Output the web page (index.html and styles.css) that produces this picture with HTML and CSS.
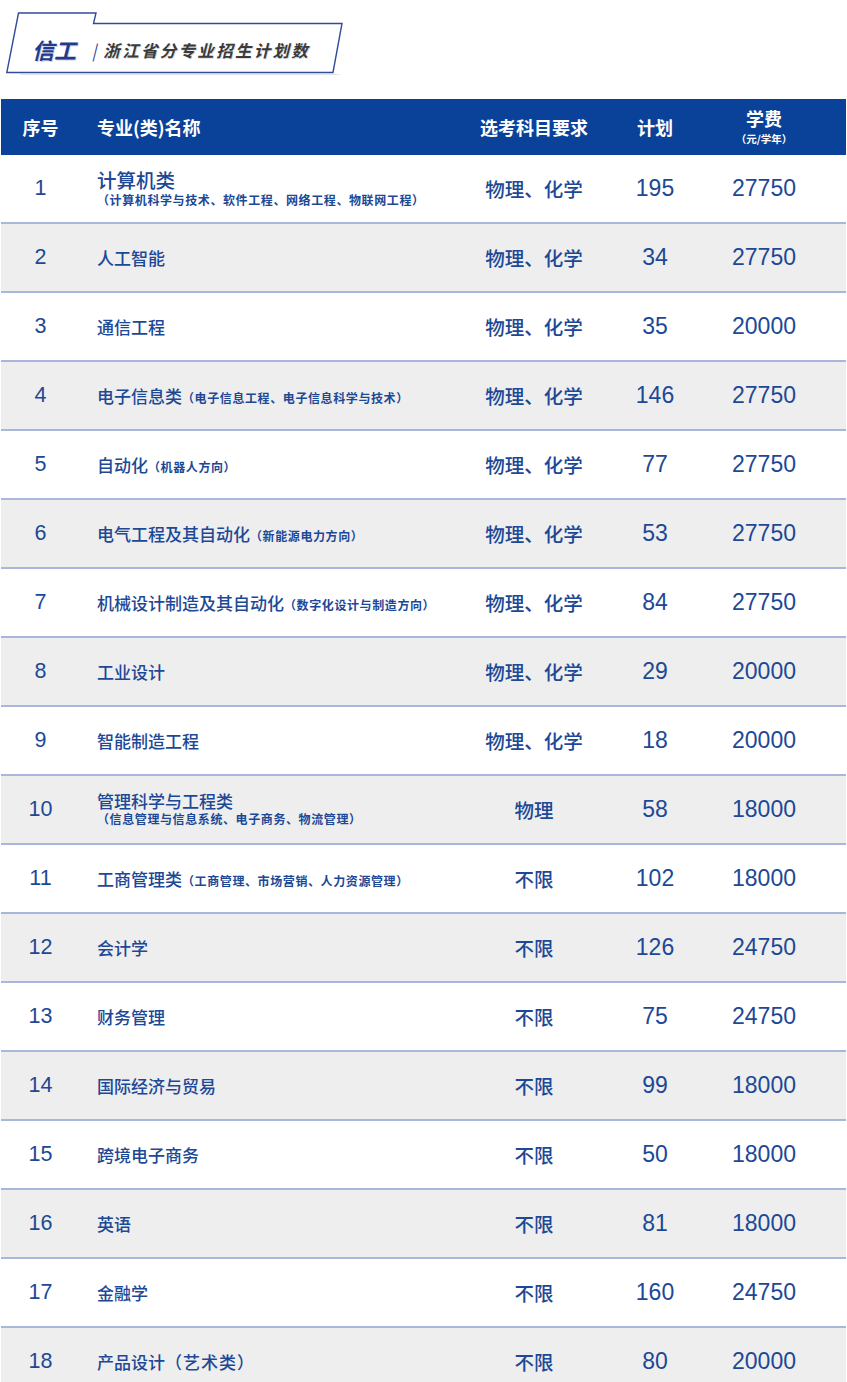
FILE: index.html
```html
<!DOCTYPE html>
<html lang="zh-CN">
<head>
<meta charset="utf-8">
<title>信工 浙江省分专业招生计划数</title>
<link rel="stylesheet" href="styles.css">
</head>
<body>
<div class="page">
  <div class="title-area">
    <div class="tag">
      <svg class="tag-shape" width="340" height="64" viewBox="0 0 340 64" aria-hidden="true">
        <polygon points="14,63 336,63 330,62 14,62" fill="#e2e2e2"/>
        <polygon points="12.5,1 90,1 87.5,11.5 336,11.5 327,60.5 0.8,60.5" fill="#ffffff" stroke="#2f4b9b" stroke-width="1.4" stroke-linejoin="miter"/>
      </svg>
      <span class="tag-school">信工</span>
      <span class="tag-bar">|</span>
      <span class="tag-text">浙江省分专业招生计划数</span>
    </div>
  </div>

  <div class="table">
    <div class="row head">
      <div class="c-no">序号</div>
      <div class="c-name">专业(类)名称</div>
      <div class="c-subj">选考科目要求</div>
      <div class="c-plan">计划</div>
      <div class="c-fee fee-head"><span>学费</span><small>（元/学年）</small></div>
    </div>

    <div class="row">
      <div class="c-no">1</div>
      <div class="c-name stacked"><span class="big">计算机类</span><span class="note">（计算机科学与技术、软件工程、网络工程、物联网工程）</span></div>
      <div class="c-subj">物理、化学</div>
      <div class="c-plan">195</div>
      <div class="c-fee">27750</div>
    </div>
    <div class="row">
      <div class="c-no">2</div>
      <div class="c-name">人工智能</div>
      <div class="c-subj">物理、化学</div>
      <div class="c-plan">34</div>
      <div class="c-fee">27750</div>
    </div>
    <div class="row">
      <div class="c-no">3</div>
      <div class="c-name">通信工程</div>
      <div class="c-subj">物理、化学</div>
      <div class="c-plan">35</div>
      <div class="c-fee">20000</div>
    </div>
    <div class="row">
      <div class="c-no">4</div>
      <div class="c-name">电子信息类<span class="note">（电子信息工程、电子信息科学与技术）</span></div>
      <div class="c-subj">物理、化学</div>
      <div class="c-plan">146</div>
      <div class="c-fee">27750</div>
    </div>
    <div class="row">
      <div class="c-no">5</div>
      <div class="c-name">自动化<span class="note">（机器人方向）</span></div>
      <div class="c-subj">物理、化学</div>
      <div class="c-plan">77</div>
      <div class="c-fee">27750</div>
    </div>
    <div class="row">
      <div class="c-no">6</div>
      <div class="c-name">电气工程及其自动化<span class="note">（新能源电力方向）</span></div>
      <div class="c-subj">物理、化学</div>
      <div class="c-plan">53</div>
      <div class="c-fee">27750</div>
    </div>
    <div class="row">
      <div class="c-no">7</div>
      <div class="c-name">机械设计制造及其自动化<span class="note">（数字化设计与制造方向）</span></div>
      <div class="c-subj">物理、化学</div>
      <div class="c-plan">84</div>
      <div class="c-fee">27750</div>
    </div>
    <div class="row">
      <div class="c-no">8</div>
      <div class="c-name">工业设计</div>
      <div class="c-subj">物理、化学</div>
      <div class="c-plan">29</div>
      <div class="c-fee">20000</div>
    </div>
    <div class="row">
      <div class="c-no">9</div>
      <div class="c-name">智能制造工程</div>
      <div class="c-subj">物理、化学</div>
      <div class="c-plan">18</div>
      <div class="c-fee">20000</div>
    </div>
    <div class="row">
      <div class="c-no">10</div>
      <div class="c-name stacked"><span>管理科学与工程类</span><span class="note">（信息管理与信息系统、电子商务、物流管理）</span></div>
      <div class="c-subj">物理</div>
      <div class="c-plan">58</div>
      <div class="c-fee">18000</div>
    </div>
    <div class="row">
      <div class="c-no">11</div>
      <div class="c-name">工商管理类<span class="note">（工商管理、市场营销、人力资源管理）</span></div>
      <div class="c-subj">不限</div>
      <div class="c-plan">102</div>
      <div class="c-fee">18000</div>
    </div>
    <div class="row">
      <div class="c-no">12</div>
      <div class="c-name">会计学</div>
      <div class="c-subj">不限</div>
      <div class="c-plan">126</div>
      <div class="c-fee">24750</div>
    </div>
    <div class="row">
      <div class="c-no">13</div>
      <div class="c-name">财务管理</div>
      <div class="c-subj">不限</div>
      <div class="c-plan">75</div>
      <div class="c-fee">24750</div>
    </div>
    <div class="row">
      <div class="c-no">14</div>
      <div class="c-name">国际经济与贸易</div>
      <div class="c-subj">不限</div>
      <div class="c-plan">99</div>
      <div class="c-fee">18000</div>
    </div>
    <div class="row">
      <div class="c-no">15</div>
      <div class="c-name">跨境电子商务</div>
      <div class="c-subj">不限</div>
      <div class="c-plan">50</div>
      <div class="c-fee">18000</div>
    </div>
    <div class="row">
      <div class="c-no">16</div>
      <div class="c-name">英语</div>
      <div class="c-subj">不限</div>
      <div class="c-plan">81</div>
      <div class="c-fee">18000</div>
    </div>
    <div class="row">
      <div class="c-no">17</div>
      <div class="c-name">金融学</div>
      <div class="c-subj">不限</div>
      <div class="c-plan">160</div>
      <div class="c-fee">24750</div>
    </div>
    <div class="row">
      <div class="c-no">18</div>
      <div class="c-name">产品设计<span class="paren">（艺术类）</span></div>
      <div class="c-subj">不限</div>
      <div class="c-plan">80</div>
      <div class="c-fee">20000</div>
    </div>
  </div>
</div>
</body>
</html>
```

FILE: styles.css
```css
* { box-sizing: border-box; }

html, body {
  margin: 0;
  padding: 0;
  background: #ffffff;
}

body {
  font-family: "Liberation Sans", "Noto Sans CJK SC", sans-serif;
  color: #1c4896;
}

.page {
  width: 847px;
}

/* ---------- title tag ---------- */
.title-area {
  height: 99px;
  padding: 12px 0 0 6px;
}

.tag {
  position: relative;
  width: 340px;
  height: 64px;
  display: flex;
  align-items: center;
  padding: 10px 0 0 26px;
}

.tag-shape {
  position: absolute;
  left: 0;
  top: 0;
}

.tag-school,
.tag-bar,
.tag-text {
  position: relative;
  font-family: "Noto Sans CJK SC", sans-serif;
  font-style: italic;
  font-weight: 700;
}

.tag-school {
  font-size: 22px;
  color: #1f3a8e;
  text-shadow: 1px 1px 0 rgba(31, 58, 142, 0.25);
}

.tag-bar {
  font-size: 16px;
  font-weight: 400;
  color: #1f3a8e;
  margin: 2px 7px 0 16px;
}

.tag-text {
  font-size: 16.5px;
  color: #3a3a3a;
  letter-spacing: 2.3px;
  margin-top: 2px;
  text-shadow: 1px 1px 0 rgba(0, 0, 0, 0.15);
}

/* ---------- table ---------- */
.table {
  width: 845px;
  margin-left: 1px;
}

.row {
  display: grid;
  grid-template-columns: 79px 381px 146px 96px 122px 1fr;
  align-items: center;
  height: 69px;
  border-bottom: 2px solid #a7b7dd;
  background: #ffffff;
}

.row:nth-child(odd) {
  background: #eeeeee;
}

.row.head {
  height: 56px;
  background: #0a4299;
  border-bottom: none;
  color: #ffffff;
  font-family: "Noto Sans CJK SC", sans-serif;
  font-weight: 700;
  font-size: 18px;
}

.c-no {
  text-align: center;
  font-size: 21.5px;
}

.head .c-no {
  font-size: 18px;
}

.c-name {
  padding-left: 17px;
  font-family: "Noto Sans CJK SC", sans-serif;
  font-weight: 500;
  font-size: 17px;
  white-space: nowrap;
}

.head .c-name {
  font-weight: 700;
  font-size: 18px;
}

.c-name.stacked {
  display: flex;
  flex-direction: column;
  line-height: 1.2;
  margin-top: -2px;
}

.c-name .big {
  font-size: 19.5px;
  line-height: 1.25;
}

.note {
  font-size: 12px;
  font-weight: 700;
  letter-spacing: 0.6px;
}

.stacked .note {
  margin-top: 1px;
}

.paren {
  letter-spacing: 1px;
}

.c-subj {
  text-align: center;
  font-family: "Noto Sans CJK SC", sans-serif;
  font-weight: 500;
  font-size: 19.5px;
}

.head .c-subj {
  font-size: 18px;
  font-weight: 700;
}

.c-plan,
.c-fee {
  text-align: center;
  font-size: 23px;
}

.head .c-plan {
  font-size: 18px;
}

.fee-head {
  display: flex;
  flex-direction: column;
  align-items: center;
  line-height: normal;
  margin-top: -3px;
}

.fee-head span {
  font-size: 18px;
}

.fee-head small {
  font-size: 10.5px;
  font-weight: 700;
}
```
